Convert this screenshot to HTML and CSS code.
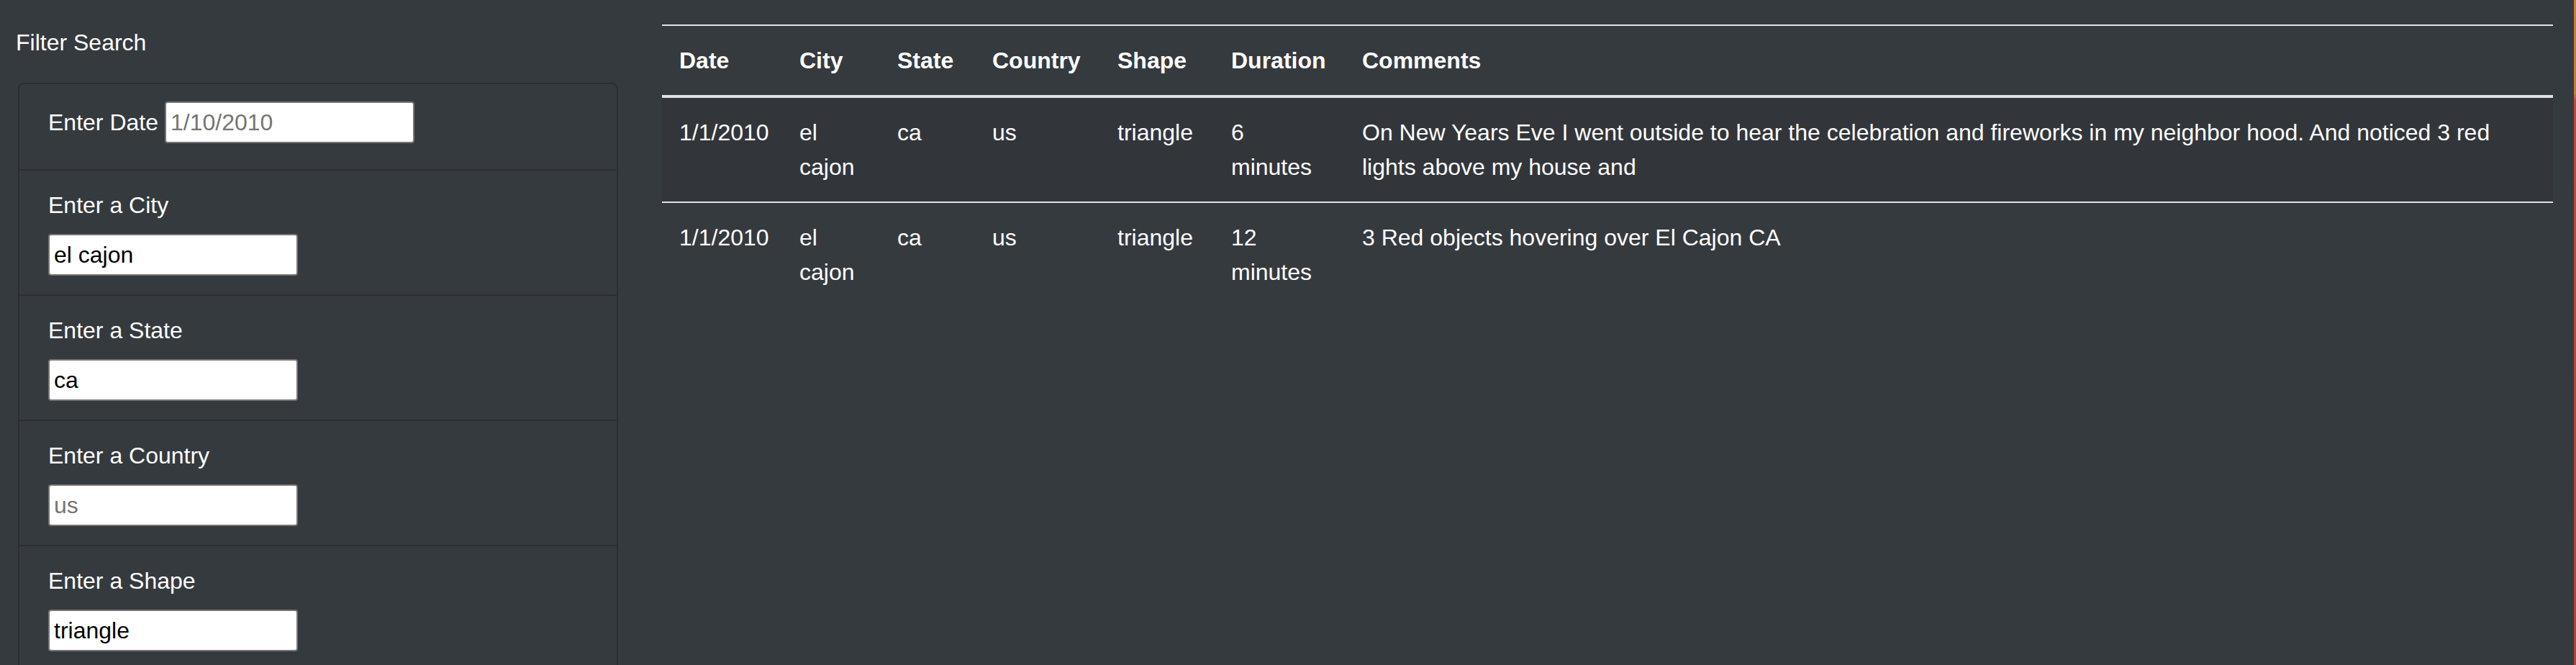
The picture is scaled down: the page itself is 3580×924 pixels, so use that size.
FILE: index.html
```html
<!DOCTYPE html>
<html lang="en">
<head>
<meta charset="utf-8">
<title>UFO Sightings</title>
<link rel="stylesheet" href="styles.css">
</head>
<body>
<div class="page">
  <aside class="sidebar">
    <div class="title">Filter Search</div>
    <div class="card">
      <div class="item item-inline">
        <label class="label-inline" for="datetime">Enter Date</label>
        <input class="field" id="datetime" type="text" placeholder="1/10/2010">
      </div>
      <div class="item">
        <label class="label" for="city">Enter a City</label>
        <input class="field" id="city" type="text" value="el cajon">
      </div>
      <div class="item">
        <label class="label" for="state">Enter a State</label>
        <input class="field" id="state" type="text" value="ca">
      </div>
      <div class="item">
        <label class="label" for="country">Enter a Country</label>
        <input class="field" id="country" type="text" placeholder="us">
      </div>
      <div class="item">
        <label class="label" for="shape">Enter a Shape</label>
        <input class="field" id="shape" type="text" value="triangle">
      </div>
    </div>
  </aside>
  <main class="main">
    <table class="ufo-table">
      <thead>
        <tr>
          <th class="c-date">Date</th>
          <th class="c-city">City</th>
          <th class="c-state">State</th>
          <th class="c-country">Country</th>
          <th class="c-shape">Shape</th>
          <th class="c-duration">Duration</th>
          <th class="c-comments">Comments</th>
        </tr>
      </thead>
      <tbody>
        <tr class="striped">
          <td>1/1/2010</td>
          <td>el cajon</td>
          <td>ca</td>
          <td>us</td>
          <td>triangle</td>
          <td>6 minutes</td>
          <td>On New Years Eve I went outside to hear the celebration and fireworks in my neighbor hood. And noticed 3 red lights above my house and</td>
        </tr>
        <tr>
          <td>1/1/2010</td>
          <td>el cajon</td>
          <td>ca</td>
          <td>us</td>
          <td>triangle</td>
          <td>12 minutes</td>
          <td>3 Red objects hovering over El Cajon CA</td>
        </tr>
      </tbody>
    </table>
  </main>
  <div class="edge"></div>
</div>
</body>
</html>
```

FILE: styles.css
```css
html, body {
  margin: 0;
  padding: 0;
}

body {
  background: #353a3f;
  color: #ffffff;
  font-family: "Liberation Sans", Arial, sans-serif;
  font-size: 32px;
  line-height: 48px;
  height: 924px;
  overflow: hidden;
}

.page {
  display: flex;
  height: 924px;
}

.sidebar {
  width: 834px;
  margin-left: 25px;
  padding-top: 35px;
  flex: none;
}

.title {
  margin: 0 0 32px -3px;
}

.card {
  border: 2px solid #2a2e33;
  border-radius: 8px;
}

.item {
  padding: 24px 40px 26px;
  border-top: 2px solid #2a2e33;
}

.item-inline {
  border-top: 0;
  display: flex;
  align-items: baseline;
  gap: 9px;
  padding-bottom: 36px;
}

.label {
  display: block;
  margin-bottom: 16px;
}

.label-inline {
  display: block;
}

.field {
  box-sizing: border-box;
  width: 347px;
  height: 58px;
  border: 2px solid #767676;
  border-radius: 4px;
  padding: 0 6px;
  margin: 0;
  background: #ffffff;
  color: #000000;
  font-family: "Liberation Sans", Arial, sans-serif;
  font-size: 32px;
  display: block;
}

.field::placeholder {
  color: #757575;
}

.main {
  flex: 1;
  margin-left: 61px;
  padding-top: 34px;
}

.ufo-table {
  width: 2628px;
  table-layout: fixed;
  border-collapse: separate;
  border-spacing: 0;
}

.ufo-table th,
.ufo-table td {
  padding: 24px;
  text-align: left;
  vertical-align: top;
  line-height: 48px;
}

.ufo-table th {
  font-weight: bold;
  border-top: 2px solid #dee2e6;
  border-bottom: 4px solid #dee2e6;
}

.ufo-table tbody tr + tr td {
  border-top: 2px solid #dee2e6;
}

.ufo-table .striped td {
  background: #32363b;
}

.c-date { width: 167px; }
.c-city { width: 136px; }
.c-state { width: 132px; }
.c-country { width: 174px; }
.c-shape { width: 158px; }
.c-duration { width: 182px; }
.c-comments { width: auto; }

.ufo-table th { box-sizing: border-box; }

.edge {
  width: 3px;
  flex: none;
  margin-left: 29px;
  background: linear-gradient(#c6803d 0, #c27a3d 130px, #b64c3c 140px, #ae433d 924px);
}
```
